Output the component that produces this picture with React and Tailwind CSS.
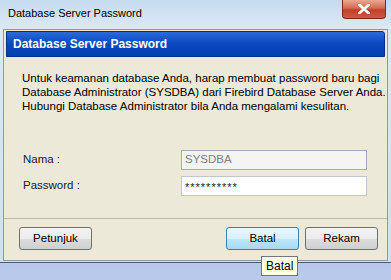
export default function App() {
  const ui = { fontFamily: '"Liberation Sans", Arial, sans-serif' };
  const btn = 'w-[73px] h-[23px] rounded-[3px] border text-black text-[11.5px]';
  const grey = 'border-[#707070] bg-[linear-gradient(to_bottom,#f2f2f2,#ebebeb_50%,#dddddd_51%,#cfcfcf)]';
  return (
    <div className="w-[391px] h-[280px] overflow-hidden relative bg-[linear-gradient(to_bottom,#6f86c4,#9fb3e2_6px,#b9c9ec)]" style={ui}>
      <div className="h-[263px] bg-[linear-gradient(to_bottom,#c6daef,#dbe8f5_28px,#cfe0f2)] border-b border-[#4d5a6c] flex flex-col">
        <div className="h-[29px] flex items-start justify-between pl-[8px] pr-[5px]">
          <span className="mt-[5px] text-[11px] text-black">Database Server Password</span>
          <div className="w-[44px] h-[19px] rounded-b-[4px] border border-[#7a2a20] border-t-0 bg-[linear-gradient(to_bottom,#eaa894,#d66a52_45%,#c2402a_55%,#cc5a40)] flex items-center justify-center">
            <svg width="12" height="10" viewBox="0 0 12 10">
              <path d="M1.5 1 L10.5 9 M10.5 1 L1.5 9" stroke="#fff" strokeWidth="2.6" strokeLinecap="square" />
            </svg>
          </div>
        </div>
        <div className="h-[232px] mx-[3px] border border-[#8b9aab] bg-[#ece9d8] flex flex-col">
          <div className="mx-[2px] mt-[1px] h-[26px] bg-[linear-gradient(to_bottom,#2a6ad8,#0a48c0_50%,#0340b0)] border border-[#0a2e84] rounded-tr-[3px] flex items-center pl-[6px]">
            <span className="text-white font-bold text-[12px]">Database Server Password</span>
          </div>
          <div className="pl-[18px] pt-[14px] text-[11.5px] leading-[14px] text-black whitespace-nowrap">
            <p>Untuk keamanan database Anda, harap membuat password baru bagi</p>
            <p>Database Administrator (SYSDBA) dari Firebird Database Server Anda.</p>
            <p>Hubungi Database Administrator bila Anda mengalami kesulitan.</p>
          </div>
          <div className="mt-[37px] pl-[19px] pr-[20px] flex flex-col gap-[6px] text-[11.5px] text-[#1a1a1a]">
            <div className="flex items-center">
              <span className="w-[158px]">Nama :</span>
              <div className="flex-1 h-[20px] border border-[#a5acb5] bg-[#f4f4f2] flex items-center px-[3px] text-[#808080]">SYSDBA</div>
            </div>
            <div className="flex items-center">
              <span className="w-[158px]">Password :</span>
              <div className="flex-1 h-[20px] border border-[#c0c6cc] bg-white flex items-center px-[3px] pt-[3px] text-[#222] text-[11px] tracking-[1px]">**********</div>
            </div>
          </div>
          <div className="mt-[22px] border-t border-[#b9b7a8]" />
          <div className="flex items-center pl-[15px] pr-[9px] pt-[8px]">
            <button className={`${btn} ${grey}`}>Petunjuk</button>
            <div className="flex-1" />
            <button className={`${btn} w-[72px] border-[#3c7fb1] bg-[linear-gradient(to_bottom,#eaf6fd,#d9f0fc_50%,#bee6fd_51%,#a7d9f5)] mr-[6px]`}>Batal</button>
            <button className={`${btn} ${grey}`}>Rekam</button>
          </div>
        </div>
      </div>
      <div className="absolute left-[261px] top-[256px] h-[20px] px-[4px] border border-[#767676] bg-[#ffffe1] text-[12px] flex items-center">Batal</div>
    </div>
  );
}
